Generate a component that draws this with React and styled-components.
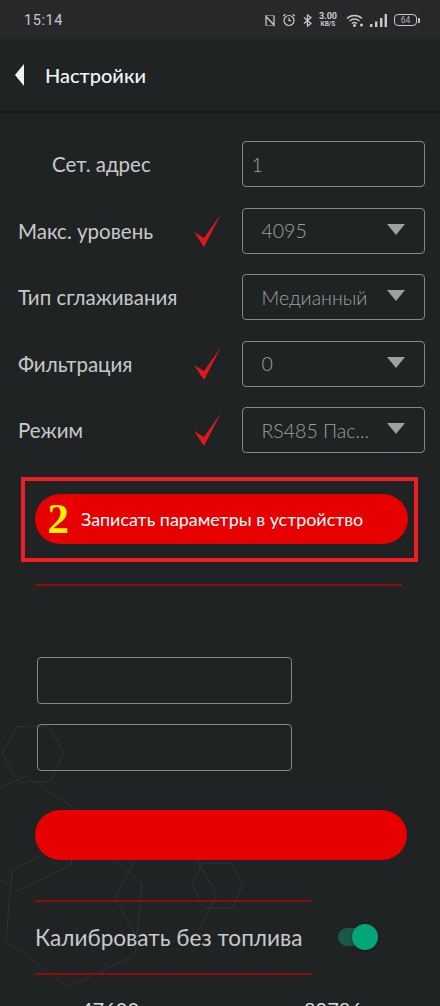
import styled, { createGlobalStyle } from "styled-components";

const GlobalStyle = createGlobalStyle`
  html, body {
    margin: 0;
    padding: 0;
    background: #1f2324;
  }
`;

const Screen = styled.div`
  position: relative;
  width: 440px;
  height: 1006px;
  overflow: hidden;
  background: #1f2324;
  font-family: "Lato", "Noto Sans", sans-serif;
`;

const Content = styled.div`
  position: relative;
  z-index: 1;
`;

const StatusBar = styled.div`
  height: 40px;
  background: #272829;
  display: flex;
  align-items: center;
  justify-content: space-between;
  padding: 0 21px 0 24px;
  box-sizing: border-box;
  color: #c8c8c8;
`;

const Clock = styled.span`
  font-family: "Roboto", sans-serif;
  font-size: 14.5px;
  letter-spacing: 0.6px;
`;

const StatusIcons = styled.div`
  display: flex;
  align-items: center;
  gap: 7px;
`;

const Speed = styled.div`
  display: flex;
  flex-direction: column;
  align-items: center;
  margin-right: 2px;
  font-family: "Roboto", sans-serif;
  font-weight: 700;
  font-size: 9px;
  line-height: 8px;
  color: #c8c8c8;
  span + span {
    font-size: 6.5px;
  }
`;

const Battery = styled.div`
  position: relative;
  box-sizing: border-box;
  width: 23px;
  height: 12px;
  margin-right: 2px;
  border: 1px solid #c8c8c8;
  border-radius: 4px;
  font-family: "Roboto", sans-serif;
  font-size: 8.5px;
  line-height: 10px;
  text-align: center;
  color: #b0b0b0;
  &::after {
    content: "";
    position: absolute;
    right: -3.5px;
    top: 2.5px;
    width: 2px;
    height: 5px;
    background: #c8c8c8;
    border-radius: 0 1px 1px 0;
  }
`;

const Header = styled.div`
  height: 71px;
  display: flex;
  align-items: center;
  padding: 0 0 2px 15px;
  box-sizing: border-box;
  background: #1f2324;
  box-shadow: 0 1px 3px rgba(0, 0, 0, 0.45);
`;

const BackArrow = styled.div`
  width: 0;
  height: 0;
  border-top: 11px solid transparent;
  border-bottom: 11px solid transparent;
  border-right: 9px solid #f2f2f2;
  margin-right: 21px;
`;

const Title = styled.h1`
  margin: 0;
  font-size: 20px;
  font-weight: 500;
  color: #f4f4f4;
`;

const Form = styled.div`
  display: flex;
  flex-direction: column;
  gap: 20.5px;
  padding: 30px 15px 0 18px;
`;

const Row = styled.div`
  display: grid;
  grid-template-columns: 174px 49.5px 183px;
  align-items: center;
  height: 46px;
`;

const Label = styled.div`
  font-size: 20.5px;
  color: #c9c9c9;
  white-space: nowrap;
  padding-left: ${(p) => (p.$indent ? "34px" : "0")};
`;

const TickBox = styled.div`
  display: flex;
  align-items: center;
`;

const Field = styled.div`
  box-sizing: border-box;
  height: 46px;
  border: 1.5px solid #858788;
  border-radius: 4px;
  display: flex;
  align-items: center;
  justify-content: space-between;
  padding: 0 19px 0 ${(p) => (p.$plain ? "9px" : "19px")};
  font-size: 19.5px;
  font-weight: 300;
  color: #a0a0a0;
  white-space: nowrap;
`;

const Caret = styled.div`
  flex: none;
  width: 0;
  height: 0;
  margin-bottom: 3px;
  border-left: 9.5px solid transparent;
  border-right: 9.5px solid transparent;
  border-top: 11px solid #a0a0a0;
`;

const Highlight = styled.div`
  box-sizing: border-box;
  width: 397px;
  height: 85px;
  margin: 24px 0 0 21px;
  border: 4px solid #ee1c25;
  padding: 12.5px 6.5px 12.5px 9.5px;
`;

const PillButton = styled.button`
  display: flex;
  align-items: center;
  box-sizing: border-box;
  width: ${(p) => (p.$wide ? "372.5px" : "100%")};
  height: 50px;
  margin: ${(p) => (p.$wide ? "0 0 0 34.5px" : "0")};
  padding: 0 0 0 13px;
  border: none;
  border-radius: 25px;
  background: #e60000;
  color: #ffffff;
  font-family: inherit;
  font-size: 17.9px;
  white-space: nowrap;
`;

const Step = styled.span`
  font-family: "Liberation Serif", serif;
  font-weight: 700;
  font-size: 43px;
  line-height: 50px;
  color: #fff200;
  margin-right: 12px;
`;

const Divider = styled.div`
  height: 2px;
  width: ${(p) => p.$w}px;
  margin: ${(p) => p.$top || 0}px 0 0 35px;
  background: #8f0c0c;
`;

const Inputs = styled.div`
  display: flex;
  flex-direction: column;
  gap: 20px;
  margin: 71px 0 39px 37px;
`;

const BlankInput = styled.div`
  box-sizing: border-box;
  width: 254.5px;
  height: 47px;
  border: 1.5px solid #858788;
  border-radius: 4px;
`;

const ToggleRow = styled.div`
  display: flex;
  align-items: center;
  height: 71px;
  padding-left: 35px;
  font-size: 22.6px;
  color: #c9c9c9;
  white-space: nowrap;
`;

const Switch = styled.div`
  position: relative;
  flex: none;
  width: 39px;
  height: 18px;
  margin: 0 0 2px 35.5px;
  border-radius: 9px;
  background: #1a5847;
`;

const Knob = styled.div`
  position: absolute;
  right: -1px;
  top: -4px;
  width: 26px;
  height: 26px;
  border-radius: 50%;
  background: #04a679;
  box-shadow: 0 1px 3px rgba(0, 0, 0, 0.4);
`;

const Numbers = styled.div`
  display: flex;
  justify-content: space-between;
  padding: 22px 78px 0 81px;
  font-size: 20px;
  color: #dcdcdc;
`;

const Backdrop = styled.svg`
  position: absolute;
  left: 0;
  top: 700px;
  pointer-events: none;
`;

const Tick = () => (
  <svg width="30" height="34" viewBox="0 0 30 34">
    <path d="M2 18 L12 33 L29 0 L12 24 Z" fill="#e3161e" />
  </svg>
);

const fields = [
  { label: "Макс. уровень", value: "4095", tick: true },
  { label: "Тип сглаживания", value: "Медианный" },
  { label: "Фильтрация", value: "0", tick: true },
  { label: "Режим", value: "RS485 Пас...", tick: true },
];

const App = () => {
  return (
    <Screen>
      <GlobalStyle />
      <Backdrop width="260" height="306" viewBox="0 0 260 306" fill="none" stroke="#2e3233" strokeWidth="1">
        <path d="M17 27 L48 26 L64 53 L50 82 L18 82 L2 53 Z" />
        <path d="M0 88 L25 76 L74 108 L71 165 L18 191 L0 179" />
        <path d="M43 155 L12 170 L6 240 L68 287 L135 255 L142 183 L113 160" />
        <path d="M135 160 L115 198 L137 238" />
        <path d="M197 160 L217 195 L197 233" />
        <path d="M192 185 L203 163 L232 163 L243 185 L232 208 L204 208 Z" />
      </Backdrop>
      <Content>
        <StatusBar>
          <Clock>15:14</Clock>
          <StatusIcons>
            <svg width="10" height="13" viewBox="0 0 10 13" fill="none" stroke="#c8c8c8" strokeWidth="1.3">
              <path d="M1 11.5 V2.5 L9 11 V1.5" />
              <path d="M1 1.5 L9 1.5 M1 11.5 L9 11.5" strokeWidth="0.5" />
            </svg>
            <svg width="14" height="14" viewBox="0 0 14 14" fill="none" stroke="#c8c8c8" strokeWidth="1.2">
              <circle cx="7" cy="7.5" r="5" />
              <path d="M7 4.8 V7.7 H9.2 M1.2 3 L3.4 1.2 M12.8 3 L10.6 1.2" />
            </svg>
            <svg width="9" height="13" viewBox="0 0 9 13" fill="none" stroke="#c8c8c8" strokeWidth="1.3">
              <path d="M1 3.5 L8 9.5 L4.5 12 V1 L8 3.5 L1 9.5" />
            </svg>
            <Speed>
              <span>3.00</span>
              <span>KB/S</span>
            </Speed>
            <svg width="17" height="13" viewBox="0 0 17 13" fill="none" stroke="#c8c8c8" strokeWidth="1.4">
              <path d="M1 4.5 C5 0.5 12 0.5 16 4.5 M3.5 7 C6.5 4.5 10.5 4.5 13.5 7 M6 9.5 C7.5 8.3 9.5 8.3 11 9.5" />
              <circle cx="8.5" cy="11.5" r="0.8" fill="#c8c8c8" />
              <circle cx="15.5" cy="11" r="0.8" fill="#c8c8c8" />
            </svg>
            <svg width="17" height="13" viewBox="0 0 17 13" fill="#c8c8c8">
              <rect x="0" y="10" width="2.4" height="3" />
              <rect x="5" y="7.5" width="2.4" height="5.5" />
              <rect x="10" y="4" width="2.4" height="9" />
              <rect x="14.6" y="0" width="2.4" height="13" />
            </svg>
            <Battery>64</Battery>
          </StatusIcons>
        </StatusBar>
        <Header>
          <BackArrow />
          <Title>Настройки</Title>
        </Header>
        <Form>
          <Row>
            <Label $indent>Сет. адрес</Label>
            <span />
            <Field $plain>1</Field>
          </Row>
          {fields.map((f) => (
            <Row key={f.label}>
              <Label>{f.label}</Label>
              <TickBox>{f.tick && <Tick />}</TickBox>
              <Field>
                {f.value}
                <Caret />
              </Field>
            </Row>
          ))}
        </Form>
        <Highlight>
          <PillButton>
            <Step>2</Step>
            Записать параметры в устройство
          </PillButton>
        </Highlight>
        <Divider $w={367} $top={22} />
        <Inputs>
          <BlankInput />
          <BlankInput />
        </Inputs>
        <PillButton $wide />
        <Divider $w={276} $top={40} />
        <ToggleRow>
          Калибровать без топлива
          <Switch>
            <Knob />
          </Switch>
        </ToggleRow>
        <Divider $w={276} />
        <Numbers>
          <span>47600</span>
          <span>89786</span>
        </Numbers>
      </Content>
    </Screen>
  );
};

export default App;
